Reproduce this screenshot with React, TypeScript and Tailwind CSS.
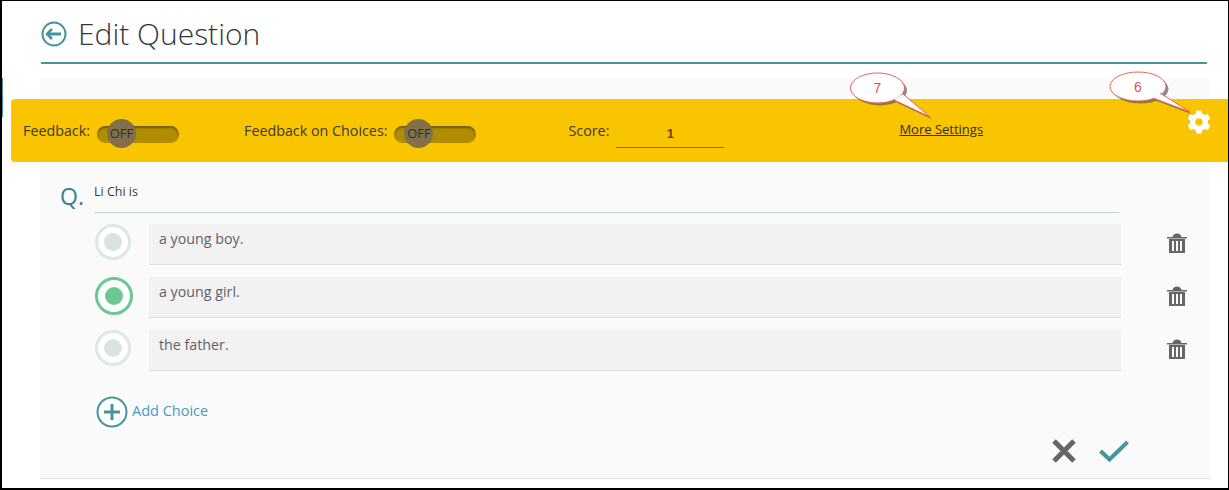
import { FaCog } from 'react-icons/fa';

const choices = [
  { text: 'a young boy.', correct: false },
  { text: 'a young girl.', correct: true },
  { text: 'the father.', correct: false },
];

function Toggle() {
  return (
    <div className="relative mt-[8px] w-[82px] h-[17px] rounded-full bg-[#b08c00] shadow-[inset_0_2px_2px_rgba(0,0,0,0.35)]">
      <div className="absolute left-[10px] -top-[7px] w-[29px] h-[29px] rounded-full bg-[#81704a] flex items-center justify-center text-[13px] text-[#33302a]">
        OFF
      </div>
    </div>
  );
}

type CalloutProps = {
  label: string;
  cx: number;
  cy: number;
  rx: number;
  ry: number;
  tail: string;
};

function Callout({ label, cx, cy, rx, ry, tail }: CalloutProps) {
  return (
    <svg width="110" height="70" viewBox="0 0 110 70" className="overflow-visible">
      <g fill="#555555" opacity="0.65" transform="translate(2.5 2.5)">
        <ellipse cx={cx} cy={cy} rx={rx} ry={ry} />
        <path d={tail + ' Z'} />
      </g>
      <ellipse cx={cx} cy={cy} rx={rx} ry={ry} fill="#ffffff" stroke="#e8625c" strokeWidth="1" />
      <path d={tail + ' Z'} fill="#ffffff" />
      <path d={tail} fill="none" stroke="#e8625c" strokeWidth="1" />
      <text x={cx} y={cy + 5} textAnchor="middle" fontSize="14" fill="#e8524c" fontFamily="'Liberation Sans', sans-serif">
        {label}
      </text>
    </svg>
  );
}

function Trash() {
  return (
    <svg width="22" height="20" viewBox="0 0 22 20" fill="#666666">
      <path d="M1 4 H6.5 C7 2 8.5 0.5 11 0.5 C13.5 0.5 15 2 15.5 4 H21 V5.5 H1 Z" />
      <path d="M3 6 H19 V20 H3 Z M6 8 V18 H8 V8 Z M10 8 V18 H12 V8 Z M14 8 V18 H16 V8 Z" fillRule="evenodd" />
    </svg>
  );
}

export default function App() {
  return (
    <div className="relative w-[1229px] h-[490px] bg-white overflow-hidden font-['Open_Sans',sans-serif]">
      <div className="absolute inset-0 border-t border-r border-l-2 border-b-2 border-black pointer-events-none z-20" />
      <div className="absolute left-[2px] top-[78px] w-px h-[39px] bg-[#45949f]" />

      <div className="pl-[41px] pr-[22px] pt-[14px]">
        <div className="flex items-center h-[40px] gap-[11px]">
          <svg width="26" height="26" viewBox="0 0 26 26" fill="none" stroke="#45949f">
            <circle cx="13" cy="13" r="11.5" strokeWidth="2" />
            <path d="M6 13 H20" strokeWidth="3" />
            <path d="M11 8 L6 13 L11 18" strokeWidth="2.5" />
          </svg>
          <h1 className="text-[30px] leading-[40px] font-light text-[#33363f]">Edit Question</h1>
        </div>
        <div className="mt-[8px] h-[2px] bg-[#45949f]" />
      </div>

      <div className="mt-[15px] ml-[40px] w-[1170px] h-[400px] bg-[#fafafa] border-b border-[#e5e5e5] pt-[20px]">
        <div className="relative -ml-[29px] w-[1218px] h-[63px] rounded-l-[4px] bg-[#f9c500] flex items-center text-[14.3px] text-[#3d3a2a]">
          <span className="ml-[12px]">Feedback:</span>
          <div className="ml-[7px]"><Toggle /></div>
          <span className="ml-[65px]">Feedback on Choices:</span>
          <div className="ml-[7px]"><Toggle /></div>
          <span className="ml-[92px]">Score:</span>
          <div className="ml-[7px] mt-[10px] w-[108px] h-[24px] border-b border-[#8a7000] text-center text-[13px] leading-[20px] font-bold text-[#7a3a00] font-['Liberation_Sans',sans-serif]">
            1
          </div>
          <a className="ml-[175px] -mt-[1px] underline text-[13px] text-[#2f2d22]">More Settings</a>
          <FaCog className="absolute left-[1176px] top-[11px] w-[24px] h-[24px] text-white" />
        </div>

        <div className="flex items-start pl-[20px] pt-[20px]">
          <span className="w-[34px] -mt-[1px] text-[23px] leading-[30px] font-medium text-[#3a7f93]">Q.</span>
          <div className="w-[1025px] h-[32px] border-b border-[#bcd9e3] pt-[2px] text-[12.5px] leading-[18px] text-[#3b3a38] -mt-[1px]">
            Li Chi is
          </div>
        </div>

        <div className="mt-[11px] flex flex-col gap-[12px]">
          {choices.map((c) => (
            <div key={c.text} className="flex items-start h-[41px]">
              <div className="w-[109px] pl-[55px]">
                {c.correct ? (
                  <div className="w-[38px] h-[38px] rounded-full border-[3px] border-[#6cc890] bg-white flex items-center justify-center">
                    <div className="w-[18px] h-[18px] rounded-full bg-[#6cc890]" />
                  </div>
                ) : (
                  <div className="w-[36px] h-[36px] rounded-full border-[3px] border-[#dde7e8] bg-white flex items-center justify-center">
                    <div className="w-[18px] h-[18px] rounded-full bg-[#d8e3e5]" />
                  </div>
                )}
              </div>
              <div className="w-[972px] h-[41px] bg-[#f2f2f2] border-b border-[#dedede] pl-[10px] pt-[5px] text-[14.25px] leading-[20px] text-[#5f6068]">
                {c.text}
              </div>
              <div className="ml-[45px] mt-[9px]"><Trash /></div>
            </div>
          ))}
        </div>

        <div className="flex items-center ml-[56px] mt-[25px] gap-[4px]">
          <svg width="32" height="32" viewBox="0 0 32 32" fill="none" stroke="#45949f" className="bg-white">
            <circle cx="16" cy="16" r="14.5" strokeWidth="2" />
            <path d="M8 16 H24 M16 8 V24" strokeWidth="3" />
          </svg>
          <span className="-mt-[2px] text-[14.5px] text-[#4a9ac0]">Add Choice</span>
        </div>

        <div className="flex items-center ml-[1011px] mt-[10px] gap-[22px]">
          <svg width="26" height="26" viewBox="0 0 26 26" fill="none" stroke="#666666" strokeWidth="5">
            <path d="M3 3 L23 23 M23 3 L3 23" />
          </svg>
          <svg width="30" height="24" viewBox="0 0 30 24" fill="none" stroke="#45949f" strokeWidth="4">
            <path d="M1.5 12 L10.5 20.5 L28.5 3" />
          </svg>
        </div>
      </div>

      <div className="absolute left-[850px] top-[73px] z-10">
        <Callout label="7" cx={27.5} cy={15} rx={27} ry={15} tail="M44 27 L80 44 L53 21" />
      </div>
      <div className="absolute left-[1110px] top-[72px] z-10">
        <Callout label="6" cx={28} cy={14.5} rx={28} ry={14.5} tail="M43 26 L80 40 L50 21" />
      </div>
    </div>
  );
}
